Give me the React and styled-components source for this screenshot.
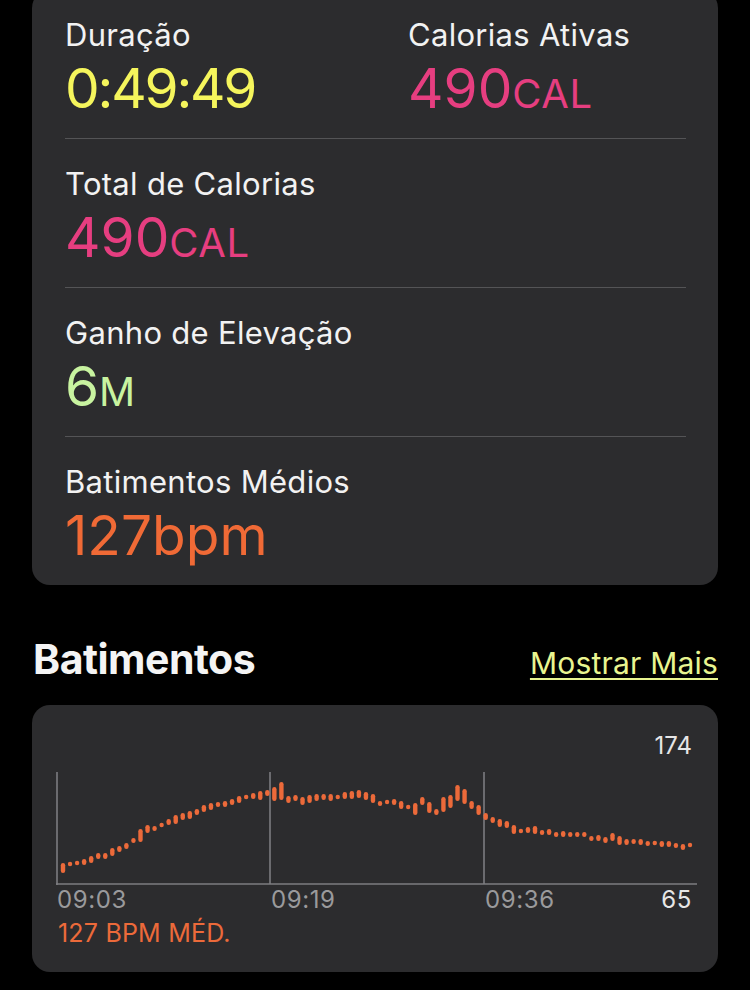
import React from "react";
import styled, { createGlobalStyle } from "styled-components";

const GlobalStyle = createGlobalStyle`
  html, body {
    margin: 0;
    padding: 0;
    background: #000;
  }
  body {
    font-family: Inter, "Noto Sans", "Liberation Sans", sans-serif;
    color: #f2f2f2;
    -webkit-font-smoothing: antialiased;
  }
`;

const Page = styled.div`
  width: 750px;
  height: 990px;
  overflow: hidden;
  box-sizing: border-box;
  padding: 0 32px;
`;

const Card = styled.div`
  background: #2c2c2e;
  border-radius: 18px;
`;

const StatsCard = styled(Card)`
  margin-top: -10px;
  padding: 0 32px 0 33px;
`;

const Row = styled.div`
  display: grid;
  grid-template-columns: ${(p) => (p.$split ? "343px 1fr" : "1fr")};
  height: ${(p) => (p.$last ? "148px" : "149px")};
  box-sizing: border-box;
  padding-top: 30px;
  border-bottom: ${(p) => (p.$last ? "none" : "1px solid #545456")};
`;

const Stat = styled.div`
  display: flex;
  flex-direction: column;
`;

const Label = styled.div`
  font-size: 31px;
  line-height: 30px;
  letter-spacing: 0.3px;
  color: #f2f2f2;
  white-space: nowrap;
`;

const Value = styled.div`
  margin-top: 11px;
  font-size: 55px;
  line-height: 55px;
  letter-spacing: ${(p) => (p.$tight ? "-2.2px" : "0")};
  color: ${(p) => p.$color};
  white-space: nowrap;
`;

const Unit = styled.span`
  font-size: 40px;
  letter-spacing: 0.5px;
  text-transform: uppercase;
`;

const SectionHead = styled.div`
  display: flex;
  align-items: baseline;
  justify-content: space-between;
  margin-top: 54px;
  padding-left: 1px;
`;

const Title = styled.h2`
  margin: 0;
  font-size: 41px;
  line-height: 41px;
  font-weight: 700;
  letter-spacing: -0.5px;
  color: #f4f4f4;
`;

const MoreLink = styled.a`
  font-size: 30px;
  line-height: 30px;
  letter-spacing: 0.2px;
  color: #e9f590;
  text-decoration: underline;
  text-decoration-thickness: 2px;
  text-underline-offset: 4px;
`;

const ChartCard = styled(Card)`
  margin-top: 25px;
  padding: 29px 21px 27px 24px;
`;

const MaxLabel = styled.div`
  text-align: right;
  padding-right: 5px;
  font-size: 24px;
  line-height: 24px;
  color: #e6e6e6;
`;

const ChartSvg = styled.svg`
  display: block;
  margin-top: 12px;
`;

const AxisRow = styled.div`
  display: grid;
  grid-template-columns: 214px 214px 1fr;
  margin-top: 2px;
  padding-left: 1px;
  padding-right: 5px;
  font-size: 24px;
  line-height: 23px;
  letter-spacing: 0.6px;
`;

const Tick = styled.span`
  display: flex;
  justify-content: space-between;
  color: #9a9a9c;
`;

const Bright = styled.span`
  color: #e6e6e6;
`;

const Average = styled.div`
  margin-top: 11px;
  padding-left: 2px;
  font-size: 25px;
  line-height: 23px;
  letter-spacing: 0.2px;
  color: #ec6a3a;
`;

// heart rate samples as [top, bottom] in screen px
const samples = [
  [863, 873], [862, 866], [861, 865], [859, 865], [856, 863], [853, 859],
  [853, 859], [848, 856], [846, 852], [843, 849], [838, 843], [829, 842],
  [825, 833], [826, 831], [823, 827], [819, 825], [815, 824], [813, 820],
  [811, 819], [809, 815], [805, 812], [803, 810], [802, 807], [801, 807],
  [799, 805], [796, 803], [795, 799], [793, 799], [791, 800], [790, 796],
  [787, 801], [782, 800], [796, 803], [795, 801], [797, 805], [795, 803],
  [794, 801], [794, 800], [794, 801], [795, 799], [792, 799], [791, 799],
  [790, 798], [792, 800], [794, 803], [801, 806], [800, 804], [799, 805],
  [801, 809], [805, 809], [803, 815], [797, 805], [802, 813], [809, 815],
  [797, 812], [795, 808], [785, 801], [789, 804], [801, 809], [805, 815],
  [813, 820], [817, 823], [819, 827], [821, 828], [825, 834], [829, 833],
  [827, 833], [826, 834], [830, 835], [829, 835], [832, 837], [831, 837],
  [832, 837], [832, 837], [832, 837], [836, 841], [835, 841], [837, 843],
  [833, 841], [836, 845], [839, 845], [839, 844], [839, 845], [841, 846],
  [841, 845], [841, 847], [841, 847], [843, 848], [844, 850], [843, 847],
];

const HeartChart = () => {
  const top = 770;
  const left = 56;
  const step = 627 / (samples.length - 1);
  return (
    <ChartSvg width="641" height="116" viewBox="0 0 641 116">
      <g stroke="#7c7c80" strokeWidth="1.6">
        <line x1="1" y1="2" x2="1" y2="115" />
        <line x1="214" y1="2" x2="214" y2="114" />
        <line x1="428" y1="2" x2="428" y2="114" />
        <line x1="0" y1="114" x2="641" y2="114" />
      </g>
      <g fill="#ec6a3a">
        {samples.map(([t, b], i) => {
          const h = Math.max(b - t, 4.4);
          const cx = 63 + i * step - left;
          return (
            <rect
              key={i}
              x={cx - 2.2}
              y={(t + b) / 2 - h / 2 - top}
              width="4.4"
              height={h}
              rx="2.2"
            />
          );
        })}
      </g>
    </ChartSvg>
  );
};

const App = () => {
  return (
    <>
      <GlobalStyle />
      <Page>
        <StatsCard>
          <Row $split>
            <Stat>
              <Label>Duração</Label>
              <Value $color="#f5f55c" $tight>
                0:49:49
              </Value>
            </Stat>
            <Stat>
              <Label>Calorias Ativas</Label>
              <Value $color="#e63e80">
                490<Unit>cal</Unit>
              </Value>
            </Stat>
          </Row>
          <Row>
            <Stat>
              <Label>Total de Calorias</Label>
              <Value $color="#e63e80">
                490<Unit>cal</Unit>
              </Value>
            </Stat>
          </Row>
          <Row>
            <Stat>
              <Label>Ganho de Elevação</Label>
              <Value $color="#c8f3a0">
                6<Unit>m</Unit>
              </Value>
            </Stat>
          </Row>
          <Row $last>
            <Stat>
              <Label>Batimentos Médios</Label>
              <Value $color="#f06a36">127bpm</Value>
            </Stat>
          </Row>
        </StatsCard>

        <SectionHead>
          <Title>Batimentos</Title>
          <MoreLink href="#">Mostrar Mais</MoreLink>
        </SectionHead>

        <ChartCard>
          <MaxLabel>174</MaxLabel>
          <HeartChart />
          <AxisRow>
            <Tick>09:03</Tick>
            <Tick>09:19</Tick>
            <Tick>
              09:36
              <Bright>65</Bright>
            </Tick>
          </AxisRow>
          <Average>127 BPM MÉD.</Average>
        </ChartCard>
      </Page>
    </>
  );
};

export default App;
